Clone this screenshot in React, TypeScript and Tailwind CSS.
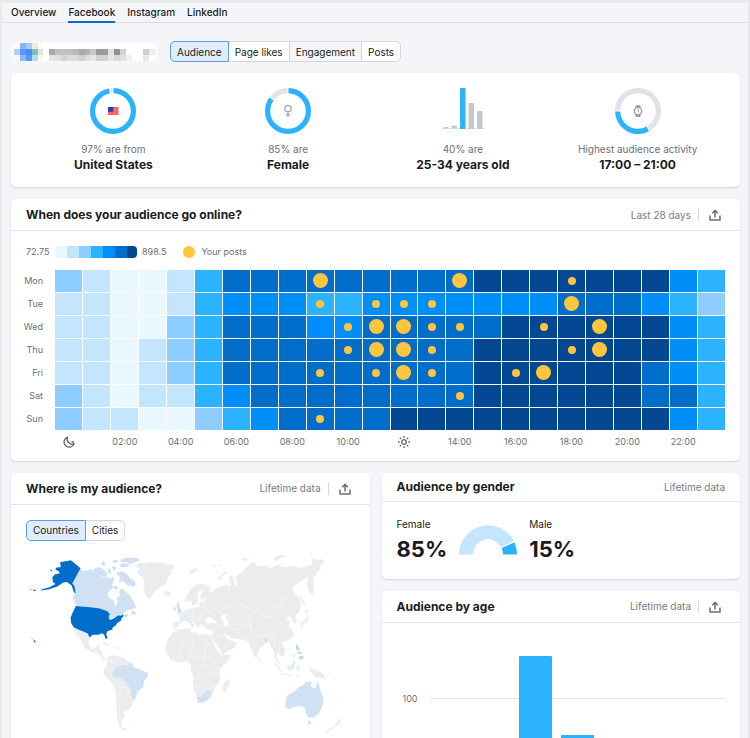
import { useState } from "react";
import type { ReactNode } from "react";
import clsx from "clsx";

const TABS = ["Overview", "Facebook", "Instagram", "LinkedIn"];

const LEVEL_CLASSES = [
  "bg-[#e9f7ff]",
  "bg-[#c4e5fe]",
  "bg-[#8ecdff]",
  "bg-[#2bb3ff]",
  "bg-[#008ff8]",
  "bg-[#006dca]",
  "bg-[#044792]",
];

interface DayActivity {
  day: string;
  // one digit per hour, an index into LEVEL_CLASSES
  levels: string;
  posts: Record<number, "sm" | "lg">;
}

const WEEK: DayActivity[] = [
  { day: "Mon", levels: "210013555555555666666643", posts: { 9: "lg", 14: "lg", 18: "sm" } },
  { day: "Tue", levels: "110013444334444444555432", posts: { 9: "sm", 11: "sm", 12: "sm", 13: "sm", 18: "lg" } },
  {
    day: "Wed",
    levels: "110023555445555566666643",
    posts: { 10: "sm", 11: "lg", 12: "lg", 13: "sm", 14: "sm", 17: "sm", 19: "lg" },
  },
  {
    day: "Thu",
    levels: "110123555555555666666643",
    posts: { 10: "sm", 11: "lg", 12: "lg", 13: "sm", 18: "sm", 19: "lg" },
  },
  {
    day: "Fri",
    levels: "110123555555555666666543",
    posts: { 9: "sm", 11: "sm", 12: "lg", 13: "sm", 16: "sm", 17: "lg" },
  },
  { day: "Sat", levels: "210113455555555666666553", posts: { 14: "sm" } },
  { day: "Sun", levels: "211002345555666666666643", posts: { 9: "sm" } },
];

const AGE_GROUPS = [
  { id: "13-17", value: 2 },
  { id: "18-24", value: 8 },
  { id: "25-34", value: 126 },
  { id: "35-44", value: 78 },
  { id: "45-54", value: 52 },
  { id: "55-64", value: 24 },
  { id: "65+", value: 12 },
];

const AVATAR_MOSAIC = [
  "#fbfcff #8ab4f8 #a9c8fb #e6efdc #f8faf5 #fff #fff #fff #fff #fff #fff #fff #fff #fff #fff #fff #fff #fff #fff #fff #fff #fff #fff #fff",
  "#b3d0fb #5b97f7 #4a8cf9 #86bcb9 #dfe9cf #fff #a8a8aa #c0c0c2 #c2c2c4 #c0c0c2 #b8b8ba #a9a9ab #b4b4b6 #c9c9cb #9b9b9f #9b9b9f #e0e0e0 #8f8f94 #d3d3d3 #fff #fff #fff #cfcfcf #ececec",
  "#f3f8ff #8fb7f8 #5b97f7 #b5dcea #f5faf5 #fff #e4e4e4 #e0e0e0 #d2d2d2 #dcdcdc #dcdcdc #d0d0d0 #dcdcdc #e6e6e6 #d2d2d2 #d2d2d2 #e6e6e6 #d8d8d8 #e2e2e2 #f0f0f0 #fff #fff #e8e8e8 #fff",
].map((row) => row.split(" "));

function AccountBadge() {
  return (
    <div className="rounded-sm bg-[#f8f9fb] px-[3px] py-px">
      <svg
        className="h-[18px] w-[141px]"
        viewBox="0 0 24 3"
        preserveAspectRatio="none"
        shapeRendering="crispEdges"
        aria-hidden="true"
      >
        {AVATAR_MOSAIC.map((row, y) =>
          row.map((fill, x) => <rect key={`${x}-${y}`} x={x} y={y} width="1" height="1" fill={fill} />)
        )}
      </svg>
    </div>
  );
}

interface PillsProps {
  options: string[];
  muted?: string;
}

function Pills({ options, muted }: PillsProps) {
  const [selected, setSelected] = useState(options[0]);

  return (
    <div className="flex">
      {options.map((option) => (
        <button
          key={option}
          type="button"
          aria-pressed={option === selected}
          onClick={() => setSelected(option)}
          className={clsx(
            "-ml-px h-[21px] border px-[6px] text-[10px] leading-none first:ml-0 first:rounded-l-[5px] last:rounded-r-[5px]",
            option === selected
              ? "relative border-[#5a9fe6] bg-[#e0edfc]"
              : "border-[#d5d7dd]",
            option !== selected && (option === muted ? "bg-[#f5f6f9]" : "bg-white")
          )}
        >
          {option}
        </button>
      ))}
    </div>
  );
}

function ExportButton() {
  return (
    <button type="button" aria-label="Export" className="ml-[7px] border-l border-[#d5d7dd] px-[10px] text-[#6c6e79]">
      <svg className="size-3" viewBox="0 0 12 12" fill="none" stroke="currentColor" strokeWidth="1.5">
        <path d="M1 6.5V11h10V6.5M6 8.5V1.5M3.2 4.2 6 1.4l2.8 2.8" />
      </svg>
    </button>
  );
}

interface CardProps {
  title: string;
  period: string;
  exportable?: boolean;
  children: ReactNode;
}

function Card({ title, period, exportable, children }: CardProps) {
  return (
    <section className="rounded-[5px] bg-white shadow-[0_1px_2px_rgba(25,27,35,0.16)]">
      <header
        className={clsx(
          "flex items-center border-b border-[#e4e5ec] pt-px px-[15px]",
          exportable ? "h-8 pr-[9px]" : "h-[29px]"
        )}
      >
        <h2 className="flex-1 text-[12px] font-bold">{title}</h2>
        <span className="text-[10px] text-[#797b86]">{period}</span>
        {exportable && <ExportButton />}
      </header>
      {children}
    </section>
  );
}

interface RingProps {
  percent: number;
  startAngle?: number;
  children: ReactNode;
}

function Ring({ percent, startAngle = 0, children }: RingProps) {
  return (
    <svg className="size-[46px]" viewBox="0 0 46 46" fill="none" aria-hidden="true">
      <g transform={`rotate(${startAngle - 90} 23 23)`} strokeWidth="5.2">
        <circle cx="23" cy="23" r="20.4" stroke="#e0e1e9" />
        <circle
          cx="23"
          cy="23"
          r="20.4"
          stroke="#fff"
          pathLength="100"
          strokeDasharray={`${percent + 1.4} 100`}
          strokeDashoffset="0.7"
        />
        <path d="M41 23h5" stroke="#fff" strokeWidth="1.2" />
        <circle
          cx="23"
          cy="23"
          r="20.4"
          stroke="#2bb3ff"
          pathLength="100"
          strokeDasharray={`${percent - 0.4} 100`}
          strokeDashoffset="-0.4"
        />
      </g>
      {children}
    </svg>
  );
}

function FlagIcon() {
  return (
    <g>
      <path fill="#ff5a5a" d="M18 19h10.500v8H18z" />
      <path stroke="#ff8c8c" strokeWidth=".6" d="M23 21h5.500M23 23h5.500M18 25.300h10.500" />
      <path fill="#2c3fa8" d="M18 19h5.300v4.800H18z" />
    </g>
  );
}

function FemaleIcon() {
  return (
    <g stroke="#a5a7b3" strokeWidth="1.300">
      <circle cx="23" cy="20.500" r="3.200" />
      <path d="M23 23.700V29M20.700 26.600h4.600" />
    </g>
  );
}

function WatchIcon() {
  return (
    <g stroke="#989ba8" strokeWidth="1.300">
      <path fill="#989ba8" stroke="none" d="M20.800 17.200h4.400l.5 2.600h-5.400zM20.800 29h4.400l.5-2.600h-5.400z" />
      <circle cx="23" cy="23.100" r="3.700" fill="#fff" />
      <path strokeWidth="1" d="M23 21v2.300l1.200 1.100" />
    </g>
  );
}

function AgeSparkline() {
  return (
    <svg className="h-[46px] w-[42px]" viewBox="0 0 42 46" aria-hidden="true">
      <path stroke="#dfe0e8" d="M0 40.500h42" />
      <g fill="#c4c7cf">
        <rect x="1.500" y="39" width="5" height="1.500" rx=".5" />
        <rect x="9.500" y="37.500" width="5.500" height="3" rx="1" />
        <rect x="26.500" y="15" width="5.500" height="26" rx="1" />
        <rect x="35" y="23" width="5.500" height="18" rx="1" />
      </g>
      <rect x="18" y="0" width="5.500" height="41" rx="1" fill="#2bb3ff" />
    </svg>
  );
}

interface FactProps {
  lead: string;
  value: string;
  children: ReactNode;
}

function Fact({ lead, value, children }: FactProps) {
  return (
    <div className="flex flex-1 flex-col items-center text-center">
      {children}
      <p className="mt-[7px] text-[10px] leading-4 text-[#6c6e79]">{lead}</p>
      <p className="text-[12px] leading-4 font-bold">{value}</p>
    </div>
  );
}

function MoonIcon() {
  return (
    <svg className="size-3" viewBox="0 0 12 12" fill="none" stroke="#5f616c" strokeWidth="1.300" aria-hidden="true">
      <path strokeLinejoin="round" d="M4.700 1A5.200 5.200 0 1 0 11.200 7.600 3.200 3.200 0 0 1 6.600 7.200 4.400 4.400 0 0 1 4.700 1zM8.500 6h2.500" />
    </svg>
  );
}

function SunIcon() {
  return (
    <svg className="size-3" viewBox="0 0 12 12" fill="none" stroke="#5f616c" strokeWidth="1.300" aria-hidden="true">
      <circle cx="6" cy="6" r="2.300" />
      <path d="M6 0v1.700M6 10.300V12M0 6h1.700M10.300 6H12M1.800 1.800 3 3M9 9l1.200 1.200M10.200 1.800 9 3M3 9 1.800 10.200" />
    </svg>
  );
}

function hourLabel(hour: number) {
  if (hour === 0) return <MoonIcon />;
  if (hour === 12) return <SunIcon />;
  return `${String(hour).padStart(2, "0")}:00`;
}

function Heatmap() {
  return (
    <div className="px-[15px] pt-[14px] pb-3 text-[9px] text-[#6c6e79]">
      <div className="flex items-center">
        <span className="w-[29px]">72.75</span>
        <div className="flex overflow-hidden rounded-[4px]">
          {LEVEL_CLASSES.map((level) => (
            <span key={level} className={clsx("h-3 w-[12px] last:w-[10px]", level)} />
          ))}
        </div>
        <span className="ml-[5px]">898.5</span>
        <span className="ml-[17px] size-3 rounded-full bg-[#ffc53d]" />
        <span className="ml-[6px]">Your posts</span>
      </div>

      <div className="mt-[11px] flex flex-col gap-px">
        {WEEK.map(({ day, levels, posts }) => (
          <div key={day} className="flex h-[22px] items-center">
            <span className="mr-3 flex w-[17px] justify-end">{day}</span>
            <div className="grid h-full flex-1 grid-cols-24 gap-px">
              {levels.split("").map((level, hour) => (
                <div key={hour} className={clsx("flex items-center justify-center", LEVEL_CLASSES[Number(level)])}>
                  {posts[hour] && (
                    <span
                      className={clsx(
                        "rounded-full bg-[#ffc53d]",
                        posts[hour] === "lg" ? "size-[15px]" : "size-2"
                      )}
                    />
                  )}
                </div>
              ))}
            </div>
          </div>
        ))}
      </div>

      <div className="mt-[5px] ml-[29px] grid h-[14px] grid-cols-24">
        {WEEK[0].levels.split("").map((_, hour) => (
          <span key={hour} className="flex items-center justify-center">
            {hour % 2 === 0 && hourLabel(hour)}
          </span>
        ))}
      </div>
    </div>
  );
}

function WorldMap() {
  return (
    <svg className="mt-1 block w-full" viewBox="18 0 987 600" role="img" aria-label="World map" strokeLinejoin="round">
      <g fill="#ebecee" stroke="#fff" strokeWidth="1">
        {/* Greenland, Iceland, Mexico, Caribbean */}
        <path d="M348 64 358 54 380 54 398 50 412 53 428 52 440 57 455 58 467 63 454 77 456 86 447 94 445 104 438 109 444 117 433 121 420 128 406 138 398 150 390 164 380 157 374 144 370 133 374 120 372 106 367 95 356 89 352 78 360 72zM430 142l6-4 10 0 8 5-4 8-12 2z" />
        <path d="M160 247 170 250 192 262 202 266 209 280 206 296 213 311 223 312 230 303 241 302 238 313 248 318 246 332 257 340 264 337 262 341 254 346 243 339 236 328 212 320 194 310 187 294 178 280 168 260 176 288 170 280z" />
        <path d="M242 295 258 293 276 304 268 304 250 298zM278 306l14 2 2 5-12-1zM299 311l8 0 0 2-8 0z" />
        <path d="M262 337 275 330 290 333 310 338 325 350 338 354 342 368 360 374 383 384 383 396 372 410 370 428 356 438 345 465 338 474 336 486 326 495 312 502 315 516 305 526 309 538 304 546 321 553 312 558 299 547 292 522 289 490 288 450 284 426 267 406 250 387 253 372 261 356zM330 541l10-1-2 4z" />
        {/* Africa */}
        <path d="M470 254 492 251 513 250 515 262 528 264 538 272 548 266 573 271 580 290 590 312 603 330 632 330 627 346 603 370 599 385 603 400 600 413 586 425 584 441 570 460 550 473 535 474 531 455 520 430 520 395 513 375 514 358 500 349 480 354 458 350 442 330 436 312 440 292 452 270z" />
      </g>
      <g fill="#d0e1f4">
        {/* Canada */}
        <path d="M181 72 190 78 204 76 214 71 222 82 236 88 246 96 262 97 271 102 277 95 284 99 280 113 275 118 281 127 268 138 262 147 267 159 281 166 288 186 293 172 290 160 301 150 297 140 302 132 313 133 318 143 326 145 335 160 344 175 349 186 338 192 322 195 310 207 298 211 283 218 270 226 266 216 270 206 245 193 205 186 168 182 159 158 165 145 165 125 157 116z" />
        <path d="M221 72 236 66 250 72 262 84 263 95 248 95 232 87 222 82zM242 54l10-5 6 9-10 4zM262 72l8-2 4 14-8 2zM276 66l10-4 2 10-7 6zM276 48 290 44 296 50 284 55zM300 58 314 54 330 60 318 66 303 66zM300 44 322 38 350 38 362 45 345 52 330 58 318 50 304 52zM288 84 306 78 322 88 330 100 345 108 348 120 338 128 334 122 324 122 308 108 298 112 300 96zM278 126l12-4 7 8-10 5zM312 210l10-4 4 6-8 8zM334 196l14 6-2 9-10-3z" />
        {/* Brazil, UK, South Africa */}
        <path d="M300 365 310 360 320 362 335 354 342 368 360 374 383 384 383 396 372 410 370 428 352 440 345 465 333 455 335 440 326 424 318 412 302 400 285 398 274 388 283 375 290 364z" />
        <path d="M471 176l7-3 2 13 6 12 2 8-18 2 5-9-4-9zM464 186l5 0-1 10-8 2z" />
        <path d="M531 456 545 455 554 444 566 435 573 435 572 449 577 450 566 464 550 473 535 474zM558 453l5 4 5-4-4-4z" fillRule="evenodd" />
      </g>
      {/* USA with Alaska and Hawaii */}
      <path
        fill="#006dca"
        d="M168 183 205 186 240 191 262 199 270 207 266 216 270 226 284 219 294 212 306 212 308 207 312 213 303 222 305 226 292 234 288 241 276 250 280 253 262 259 259 268 263 278 258 284 253 270 246 265 236 270 218 270 209 278 203 266 192 261 180 256 162 248 154 236 152 218 160 199zM120 52 153 46 182 70 157 116 164 124 167 146 162 142 155 122 141 111 130 113 112 125 88 133 64 137 64 134 88 127 107 117 99 112 97 97 105 88 119 86 117 79 108 75 107 68 123 66zM90 76l6-1 1 5zM30 132l4 1-1 3zM39 134l9 1-1 3-8-1zM30 274l5 3 0 2zM36 279l5 5-2 0zM41 285l6 4-2 5-4-4z"
      />
      <g transform="translate(495 0)">
        <g fill="#ebecee" stroke="#fff" strokeWidth="1">
          {/* Europe and Asia */}
          <path d="M4 156 18 132 36 117 54 117 79 127 74 138 80 142 92 130 112 123 128 119 134 126 140 118 132 104 136 93 144 91 148 110 154 126 158 116 152 96 164 88 184 68 198 54 210 52 220 64 246 60 256 68 284 58 296 66 330 62 346 70 366 64 384 58 380 40 396 44 414 42 418 52 404 66 412 70 398 80 394 94 386 98 389 126 385 152 372 138 366 118 370 96 354 106 338 118 324 128 330 148 346 160 349 186 344 202 332 212 338 232 330 238 322 222 312 214 305 222 318 230 312 240 326 260 326 276 308 288 294 294 290 290 302 314 302 326 290 338 283 328 278 322 276 340 290 364 280 358 270 340 266 318 258 306 250 290 243 296 228 308 219 325 215 342 205 328 197 305 190 290 172 284 148 281 134 276 118 266 125 280 138 286 157 292 150 308 120 325 112 329 104 310 90 292 80 276 84 256 62 252 54 240 44 240 41 252 34 240 20 225 30 241 24 250 12 233 0 228-14 236-20 248-34 252-35 231-14 229-16 213-22 207-4 200 4 192 20 190 44 184 44 172 60 168 66 160 52 165 44 156 50 144 56 132 44 140 38 154 40 168 30 182 22 180 18 166 6 172 2 166z" />
          <path d="M12 76l16-6 12 2-6 8-16 8zM80 62l14-4 2 4-14 4zM98 60l14-3 0 4-12 3zM100 100l12-14 14-8 2 4-16 14-2 12-10-2zM166 40l14-2 14 4-8 6-14-3zM268 36l16-6 16 0-2 8-14 2-2 8-14 0zM374 26l8-3 2 6-8 0z" />
          <path d="M342 148l6 4 14 26 2 14-8-14-12-20zM362 192l12 4-4 8-10 0zM368 206l4 12-4 16-22 4 0-6 16-8zM346 238l10 0-4 10-6-2z" />
          <path d="M222 334l6 6-2 8-6-4zM264 348l12 8 18 24 0 4-14-12zM290 384l18 3 18 4 0 4-36-7zM306 362l14-4 8-14 6 6-4 22-14 6-8-4zM336 362l14-1-8 8 6 12-6 0-2-8-4 10-1-12zM330 394l24-4-18 8zM372 370l14 2 30 14 10 20-12-6-8-2-10 2-18-20zM424 376l14 8 0 4zM444 392l12 8-1 3zM452 448l10 10-2 2z" />
          <path d="M132 402l5 8-13 30-8 2-4-12 6-15zM462 514l8 18-14 12-4-3 8-12zM450 542l0 6-24 16-8-2z" />
        </g>
        {/* Inland seas */}
        <g fill="#fff">
          <path d="M112 210l11-3 6 6-8 4 10 14-1 13-11-1-4-14-7-8zM64 224l10-10 8 6 12 10 2 6-14-2-18 2z" />
        </g>
        {/* Borders */}
        <g fill="none" stroke="#fafafb" strokeWidth="1.500">
          <path d="M44 184 62 188 70 200 92 212M62 166 56 184M20 190 26 204 48 206 66 212M0 206 12 214 28 216 42 226 56 224M4 192 12 208M26 204 22 218M48 206 44 222" />
          <path d="M108 208 102 194 138 184 166 178 190 190 212 196 202 210 194 228 176 222 156 228 136 222 128 216M212 196 230 186 262 188 298 182 290 164 308 164 324 182 346 178M212 196 236 214 268 214 298 186" />
          <path d="M100 238 118 244 140 246 158 252 178 244 196 238 200 262 180 286M158 252 160 278M194 228 200 250 214 268 236 278 262 268 270 290 286 294M84 256 98 250 104 238M92 276 116 268M112 310 136 300M262 268 254 288M270 290 266 312M286 294 284 322M136 222 148 240 168 240" />
          <path d="M-35 250-12 262-48 300 -60 298M-12 262 0 300-20 316-50 320M0 300 26 290 24 264M26 290 64 306 64 300 64 272M64 300 90 300M-20 316-10 350M10 350 20 326 26 290M-36 318-34 350M64 306 60 334 90 350 112 352M20 340 60 334M24 376 60 360 78 370 104 372M60 334 58 362M60 396 90 386 104 400M26 398 60 396 54 424 26 426M54 424 72 436 86 420 74 404M90 386 84 364 90 350M66 416 86 420" />
        </g>
        <g fill="#d0e1f4">
          <path d="M302 486 305 460 310 450 330 440 340 428 352 424 358 418 365 410 382 412 378 424 392 432 397 418 399 408 404 424 408 438 417 462 416 480 402 508 385 518 370 518 363 505 362 492 350 484 330 486 315 492 304 491zM370 528l11 0-4 10-6 2zM238 278l6 2 5 13-9-1z" />
          <path d="M333 300l6-1 5 16 0 4-9-6zM336 322l12-2 4 6-8 2zM326 335l6-8-3 10zM342 336l12-4 3 11-8-1-6 2z" fill="#bcd6f5" />
        </g>
      </g>
      <path fill="none" stroke="#fafafb" strokeWidth="1.500" d="M276 332 274 352 290 360M310 338 306 358M324 350 322 362M254 372 272 376 276 388 268 404M284 398 290 422 302 430 318 426M302 430 298 460 300 530M318 426 332 450M232 316 224 322M477 234 474 250" />
    </svg>
  );
}

function GenderSplit() {
  return (
    <div className="flex gap-3 px-[15px] pt-[14px] pb-[14px]">
      <div>
        <p className="text-[10px] leading-4">Female</p>
        <p className="mt-px text-[22px] leading-8 font-bold">85%</p>
      </div>
      <svg className="mt-[9px] h-[30px] w-[58px]" viewBox="0 0 58 30" fill="none" aria-hidden="true">
        <path stroke="#c4e5fe" strokeWidth="14" d="M7 29.500A22 22 0 0 1 48.400 19" />
        <path stroke="#2bb3ff" strokeWidth="14" d="M49 20.200A22 22 0 0 1 51 29.500" />
      </svg>
      <div>
        <p className="text-[10px] leading-4">Male</p>
        <p className="mt-px text-[22px] leading-8 font-bold">15%</p>
      </div>
    </div>
  );
}

function AgeChart() {
  return (
    <div className="px-[15px] pt-3 pb-4 text-[9px] text-[#6c6e79]">
      <div className="relative">
        {/* 165px per 100 people, 230px tall */}
        <div className="absolute inset-x-0 bottom-[158px] flex h-4 items-center">
          <span className="mr-3 w-[21px] text-right">100</span>
          <span className="h-px flex-1 bg-[#e0e1e9]" />
        </div>
        <div className="relative ml-[33px] grid h-[230px] grid-cols-7 items-end border-b border-[#c4c7cf]">
          {AGE_GROUPS.map(({ id, value }) => (
            <div
              key={id}
              className="mx-auto w-[33px] rounded-t-[1px] bg-[#2bb3ff]"
              style={{ height: `${(value * 165) / 100}px` }}
            />
          ))}
        </div>
      </div>
    </div>
  );
}

export default function App() {
  return (
    <div className="border-t-[3px] border-r-2 border-l-2 border-[#e9eaeb] bg-[#f4f5f9] font-[Inter,sans-serif] text-[#191b23]">
      <nav className="flex h-5 gap-3 border-b border-[#dcdee4] px-[9px] text-[10px] font-medium">
        {TABS.map((tab) => (
          <a
            key={tab}
            href={`#${tab.toLowerCase()}`}
            className={clsx("h-5 border-b-2 leading-[19px]", tab === "Facebook" ? "border-[#006dca]" : "border-transparent")}
          >
            {tab}
          </a>
        ))}
      </nav>

      <main className="pt-[18px] pr-2 pb-3 pl-[9px]">
        <div className="flex items-center gap-3">
          <AccountBadge />
          <Pills options={["Audience", "Page likes", "Engagement", "Posts"]} muted="Engagement" />
        </div>

        <div className="mt-[11px] flex rounded-[5px] bg-white px-[15px] pt-[15px] pb-[14px] shadow-[0_1px_2px_rgba(25,27,35,0.16)]">
          <Fact lead="97% are from" value="United States">
            <Ring percent={97}>
              <FlagIcon />
            </Ring>
          </Fact>
          <Fact lead="85% are" value="Female">
            <Ring percent={85}>
              <FemaleIcon />
            </Ring>
          </Fact>
          <Fact lead="40% are" value="25-34 years old">
            <AgeSparkline />
          </Fact>
          <Fact lead="Highest audience activity" value="17:00 – 21:00">
            <Ring percent={33} startAngle={150}>
              <WatchIcon />
            </Ring>
          </Fact>
        </div>

        <div className="mt-3">
          <Card title="When does your audience go online?" period="Last 28 days" exportable>
            <Heatmap />
          </Card>
        </div>

        <div className="mt-3 grid grid-cols-2 items-start gap-3">
          <Card title="Where is my audience?" period="Lifetime data" exportable>
            <div className="px-[15px] pt-[15px] pb-4">
              <Pills options={["Countries", "Cities"]} />
              <WorldMap />
            </div>
          </Card>
          <div className="flex flex-col gap-3">
            <Card title="Audience by gender" period="Lifetime data">
              <GenderSplit />
            </Card>
            <Card title="Audience by age" period="Lifetime data" exportable>
              <AgeChart />
            </Card>
          </div>
        </div>
      </main>
    </div>
  );
}
